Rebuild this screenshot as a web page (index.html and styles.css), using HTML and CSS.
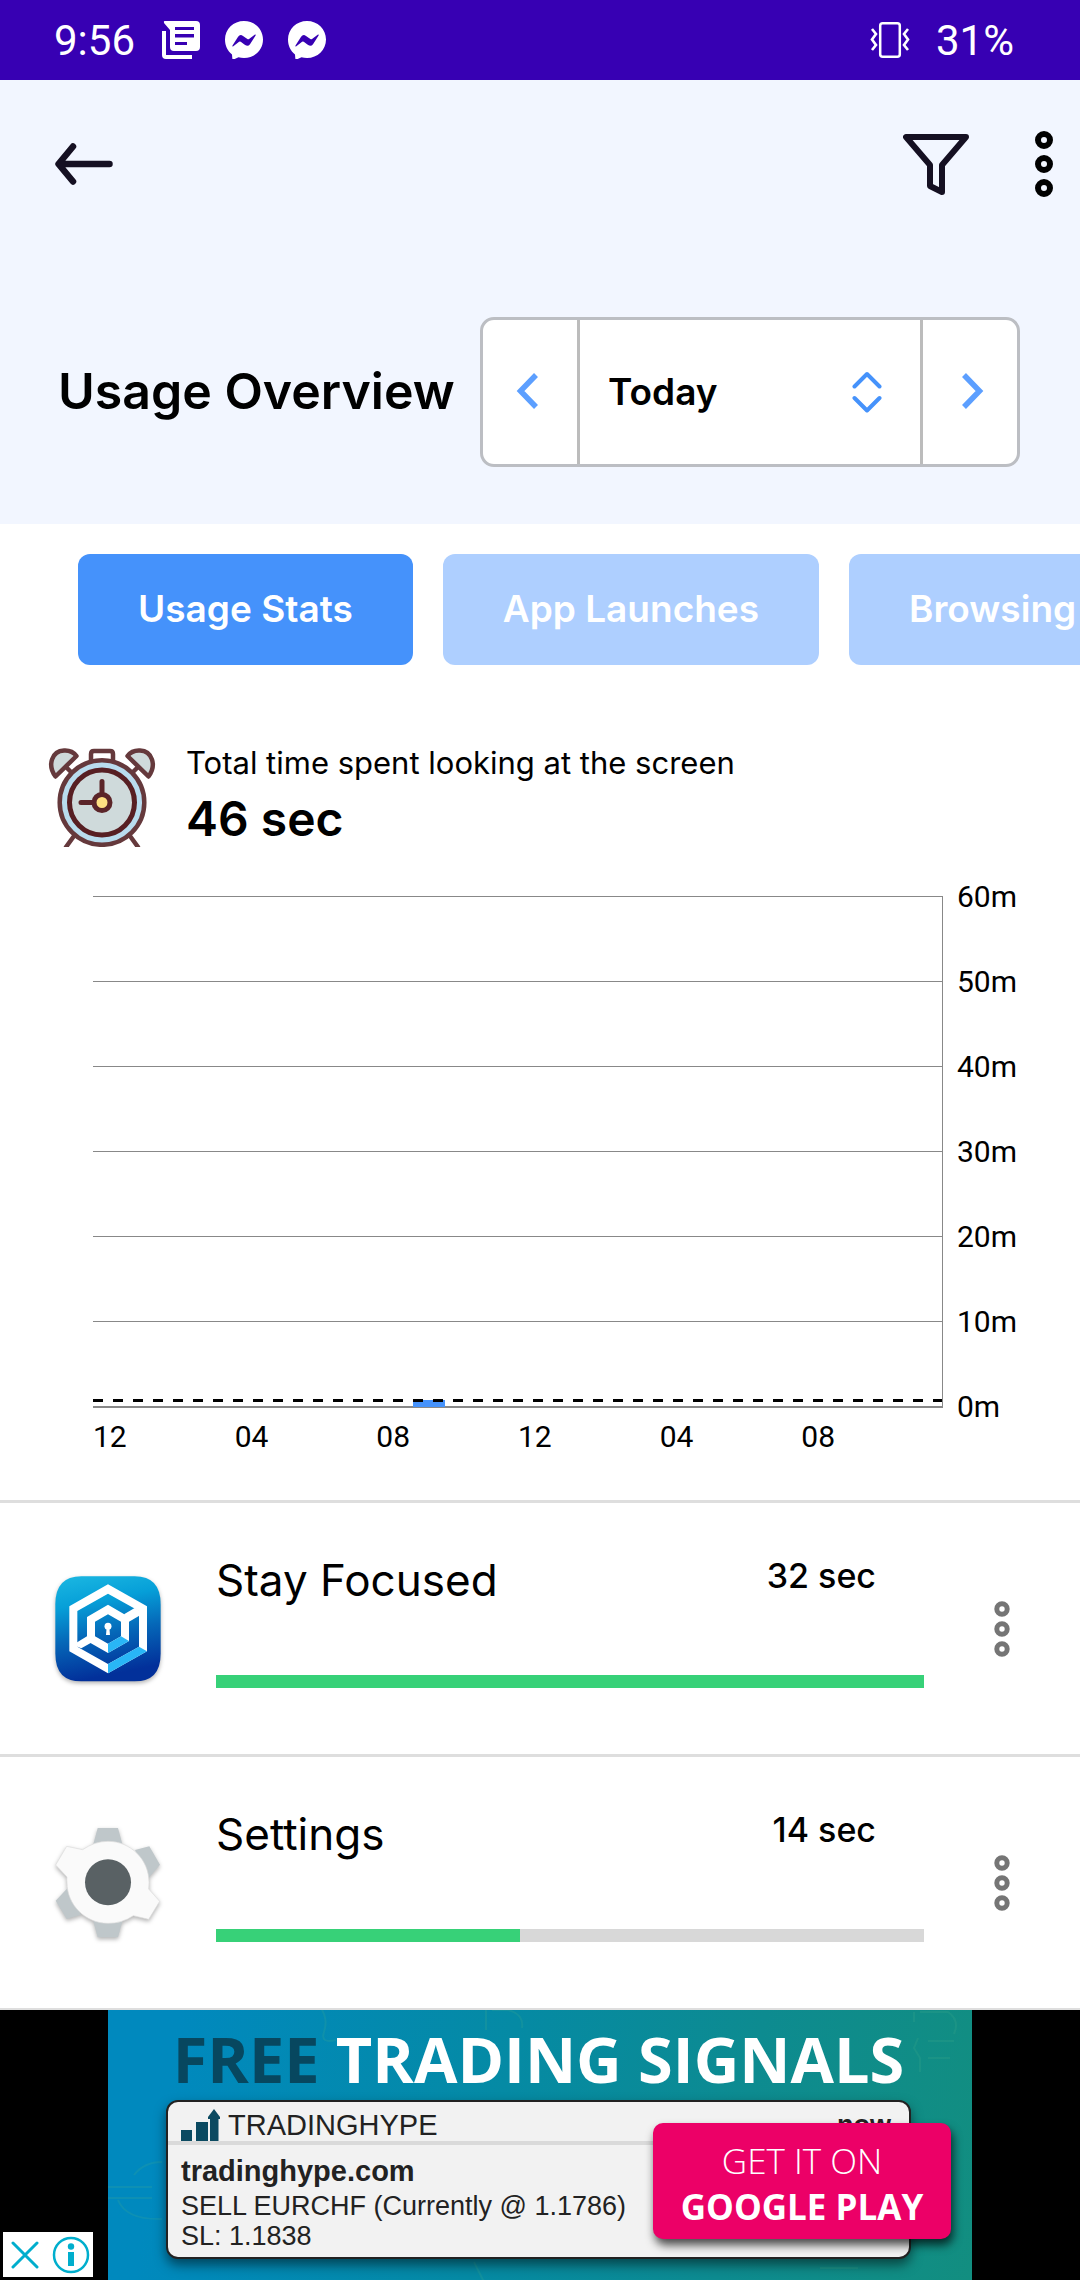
FILE: index.html
```html
<!DOCTYPE html>
<html lang="en">
<head>
<meta charset="utf-8">
<meta name="viewport" content="width=device-width, initial-scale=1">
<title>Usage Overview</title>
<link rel="stylesheet" href="styles.css">
</head>
<body>
<div class="status">
  <span>9:56</span>
  <div class="status-icons">
    <svg width="38" height="38" viewBox="0 0 38 38" aria-hidden="true"><path fill="#fff" fill-rule="evenodd" d="M2.500 0H34a4 4 0 0 1 4 4V26a4 4 0 0 1-4 4H12a4 4 0 0 1-4-4V9L2 2Q1.500 0 2.500 0zM13 6v3h19V6zM13 13v3.500h19V13zM13 21v3h12V21z"/><path fill="#fff" d="M0 10h4v24h26v4H4a4 4 0 0 1-4-4z"/></svg>
    <svg width="38" height="38" viewBox="0 0 38 38" aria-hidden="true"><path fill="#fff" d="M19 0C29.500 0 38 8 38 18.500S29.500 37 19 37q-3 0-5.500-.7L9 38.300q-1.500.5-1.700-1L7 33.500C2.500 30 0 24.500 0 18.500 0 8 8.500 0 19 0z"/><path fill="#3700b3" d="M7.500 24.500l5.600-8.800q2-2.800 4.900-.8l4.400 3.200q.8.500 1.600 0l6-4.500q1-.4.600.8L25 23.200q-2 2.800-4.900.8l-4.400-3.200q-.8-.5-1.600 0L8 25.500q-1 .3-.5-1z"/></svg>
    <svg width="38" height="38" viewBox="0 0 38 38" aria-hidden="true"><path fill="#fff" d="M19 0C29.500 0 38 8 38 18.500S29.500 37 19 37q-3 0-5.500-.7L9 38.300q-1.500.5-1.700-1L7 33.500C2.500 30 0 24.500 0 18.500 0 8 8.500 0 19 0z"/><path fill="#3700b3" d="M7.500 24.500l5.600-8.800q2-2.800 4.900-.8l4.400 3.200q.8.500 1.600 0l6-4.500q1-.4.600.8L25 23.200q-2 2.800-4.900.8l-4.400-3.200q-.8-.5-1.600 0L8 25.500q-1 .3-.5-1z"/></svg>
  </div>
  <svg class="vibrate" width="40" height="38" viewBox="0 0 40 38" fill="none" stroke="#fff" aria-hidden="true"><rect x="10.200" y="2.200" width="19.600" height="33.600" rx="2.500" stroke-width="2.500"/><path stroke-width="2.600" d="M2 8l4 5-4 5.500L6 24l-4 5M38 8l-4 5 4 5.500L34 24l4 5"/></svg>
  <span>31%</span>
</div>

<header class="header">
  <nav class="toolbar">
    <button class="icon-btn" aria-label="Back"><svg width="60" height="42" viewBox="0 0 60 42" fill="none" stroke="#151022" stroke-width="6.500" stroke-linecap="round" stroke-linejoin="round"><path d="M55.500 21H5M19 3.500L4.500 21 19 38.500"/></svg></button>
    <button class="icon-btn push" aria-label="Filter"><svg width="66" height="62" viewBox="0 0 66 62" fill="none" stroke="#151022" stroke-width="6" stroke-linejoin="round"><path d="M3 4H63L39 32V59L27 53V32z"/></svg></button>
    <button class="icon-btn" aria-label="More options"><svg width="18" height="66" viewBox="0 0 18 66" fill="none" stroke="#000" stroke-width="6"><circle cx="9" cy="9" r="6"/><circle cx="9" cy="33" r="6"/><circle cx="9" cy="57" r="6"/></svg></button>
  </nav>
  <div class="overview">
    <h1>Usage Overview</h1>
    <div class="picker">
      <button class="step" aria-label="Previous day"><svg width="28" height="38" viewBox="0 0 28 38" fill="none" stroke="#5c9fff" stroke-width="5.500"><path d="M20 2L4.500 18 20 34"/></svg></button>
      <div class="range">
        <select aria-label="Date range"><option>Today</option></select>
        <svg width="30" height="42" viewBox="0 0 30 42" fill="none" stroke="#4592fb" stroke-width="4" stroke-linecap="round" stroke-linejoin="round" aria-hidden="true"><path d="M2.500 15.500L15 3l12.500 12.500M2.500 27L15 39.500 27.500 27"/></svg>
      </div>
      <button class="step" aria-label="Next day"><svg width="28" height="38" viewBox="0 0 28 38" fill="none" stroke="#5c9fff" stroke-width="5.500"><path d="M8 2L23.500 18 8 34"/></svg></button>
    </div>
  </div>
</header>

<main>
  <div class="tabs">
    <button class="tab active">Usage Stats</button>
    <button class="tab">App Launches</button>
    <button class="tab">Browsing</button>
  </div>

  <section class="summary">
    <svg width="108" height="99" viewBox="0 0 108 99" aria-hidden="true">
      <g stroke="#65393c" stroke-width="4.500" stroke-linecap="round" stroke-linejoin="round" fill="#cfdadb">
        <path d="M26 88l-8 11M82 88l8 11M19 20l8 8M89 20l-8 8" fill="none"/>
        <path d="M7.500 28.500C-1 17 4 3 16 2.500Q24 2 28.500 8zM100.500 28.500C109 17 104 3 92 2.500Q84 2 79.500 8z"/>
        <path d="M43 12V6q0-3 3-3h16q3 0 3 3v6" fill="#fff"/>
        <circle cx="54" cy="54.500" r="42.300" fill="#b9dcee"/>
      </g>
      <circle cx="54" cy="54.500" r="32.500" fill="#cfdadb" stroke="#571f23" stroke-width="5"/>
      <path d="M54 54.500V33.500M54 54.500H33" stroke="#5b2529" stroke-width="5" stroke-linecap="round"/>
      <circle cx="54" cy="54.500" r="8" fill="#ffe082" stroke="#5b2529" stroke-width="5"/>
    </svg>
    <div>
      <p class="caption">Total time spent looking at the screen</p>
      <p class="total">46 sec</p>
    </div>
  </section>

  <section class="chart" aria-label="Screen time by hour">
    <div class="plot-col">
      <div class="plot">
        <i></i><i></i><i></i><i></i><i></i><i></i>
        <div class="bars"><b></b></div>
        <div class="limit"></div>
      </div>
      <div class="x-axis"><span>12</span><span>04</span><span>08</span><span>12</span><span>04</span><span>08</span></div>
    </div>
    <div class="y-axis"><span>60m</span><span>50m</span><span>40m</span><span>30m</span><span>20m</span><span>10m</span><span>0m</span></div>
  </section>

  <ul class="apps">
    <li class="app">
      <svg class="app-icon" width="106" height="106" viewBox="45 45 318 318" aria-hidden="true">
        <defs><linearGradient id="sf" x1="0" y1="0" x2="0.200" y2="1"><stop offset="0" stop-color="#1cb8e2"/><stop offset=".3" stop-color="#069fd8"/><stop offset=".62" stop-color="#0567b8"/><stop offset="1" stop-color="#02309a"/></linearGradient></defs>
        <path fill="url(#sf)" d="M46 130Q46 46 124 46H284Q362 46 362 130V278Q362 361 284 361H124Q46 361 46 278z"/>
        <g fill="#fff">
          <path fill-rule="evenodd" d="M204 70L321 136V271L204 337 88 271V136zM204 98L112 150V257L204 309 297 257V150z"/>
          <path fill-rule="evenodd" d="M204 131L267 168V240L204 276 141 240V168zM204 160L165 182V226L204 248 243 226V182z"/>
          <path d="M252 160L284 141 312 156 267 182zM98 252L141 226 156 244 124 262z"/>
          <circle cx="204" cy="196" r="10.500"/><path d="M200 199h8l2 23h-12z"/>
        </g>
        <path fill="#29b6f6" d="M204 309L297 257 321 271 204 337zM204 248L243 226 267 240 204 276z"/>
      </svg>
      <div class="usage">
        <div class="usage-head"><h2>Stay Focused</h2><span>32 sec</span></div>
        <progress value="100" max="100" aria-label="Stay Focused usage"></progress>
      </div>
      <button class="icon-btn more" aria-label="Stay Focused options"><svg width="16" height="56" viewBox="0 0 16 56" fill="none" stroke="#757575" stroke-width="5"><circle cx="8" cy="8" r="5.200"/><circle cx="8" cy="28" r="5.200"/><circle cx="8" cy="48" r="5.200"/></svg></button>
    </li>
    <li class="app">
      <svg class="app-icon" width="106" height="112" viewBox="165 260 318 336" aria-hidden="true">
        <path fill="#bfc7ca" d="M293 263H354L368 315H279zM405 329L448 318 480 373 446 412zM203 443L167 481 200 536 243 523zM279 540H368L354 591H293z"/>
        <path fill="#fafafa" stroke="#dcdcdc" stroke-width="2" d="M200 318L248 328Q284 303 324 303C392 303 447 358 447 426Q447 436 446 446L479 483 446 537 400 526Q366 549 324 549C256 549 201 494 201 426Q200 418 201 410L167 374z"/>
        <circle cx="324" cy="426" r="69" fill="#596164"/>
      </svg>
      <div class="usage">
        <div class="usage-head"><h2>Settings</h2><span>14 sec</span></div>
        <progress value="43" max="100" aria-label="Settings usage"></progress>
      </div>
      <button class="icon-btn more" aria-label="Settings options"><svg width="16" height="56" viewBox="0 0 16 56" fill="none" stroke="#757575" stroke-width="5"><circle cx="8" cy="8" r="5.200"/><circle cx="8" cy="28" r="5.200"/><circle cx="8" cy="48" r="5.200"/></svg></button>
    </li>
  </ul>
</main>

<aside class="banner">
  <div class="ad">
    <svg class="ad-deco" viewBox="0 0 864 270" preserveAspectRatio="none" fill="none" stroke="#45b08a" stroke-opacity=".2" stroke-width="2" aria-hidden="true"><path d="M26 165Q36 152 54 152M0 177H44M0 188H44M10 190Q18 210 54 209M378 0V20M384 0H400Q416 4 414 18M214 0q6 10 2 22t12 8M222 248H252M366 252l10 20M806 12V2M812 2H840Q852 10 846 24M820 31H846M820 48H842M810 28l-4 10 6 10v14M712 258H750"/></svg>
    <p class="ad-title"><span>FREE</span> TRADING SIGNALS</p>
    <div class="ad-card">
      <div class="ad-head">
        <svg width="39" height="32" viewBox="0 0 39 32" fill="#0b4a61" aria-hidden="true"><path d="M0 21H11V32H0zM15 13H27V32H15zM29 10H27V8L33 0 39 8V10H37.500V32H29z"/></svg>
        <span>TRADINGHYPE</span><b>now</b>
      </div>
      <div class="ad-body">
        <p class="ad-site">tradinghype.com</p>
        <p>SELL EURCHF (Currently @ 1.1786)</p>
        <p>SL: 1.1838</p>
      </div>
    </div>
    <a class="cta" href="#">GET IT ON<b>GOOGLE PLAY</b></a>
  </div>
  <div class="ad-choices">
    <button class="icon-btn" aria-label="Close ad"><svg width="28" height="28" viewBox="0 0 28 28" fill="none" stroke="#00aecd" stroke-width="3" stroke-linecap="round"><path d="M2 2l24 24M26 2L2 26"/></svg></button>
    <button class="icon-btn" aria-label="About this ad"><svg width="38" height="38" viewBox="0 0 38 38" fill="#00aecd"><circle cx="19" cy="19" r="17" fill="none" stroke="#00aecd" stroke-width="2.500"/><circle cx="19" cy="10.500" r="3.200"/><path d="M16 16h6v14h-6z"/></svg></button>
  </div>
</aside>
</body>
</html>
```
FILE: styles.css
```css
* { box-sizing: border-box; }

body {
  margin: 0;
  background: #fff;
  color: #000;
  font-family: Inter, "Open Sans", sans-serif;
  overflow-x: hidden;
}

h1, h2, p, ul { margin: 0; padding: 0; }
button, select { font: inherit; color: inherit; border: 0; background: none; padding: 0; }
svg { display: block; flex: none; }

.icon-btn { display: flex; align-items: center; justify-content: center; }

/* Status bar */
.status {
  display: flex;
  align-items: center;
  height: 80px;
  padding: 0 66px 0 54px;
  background: #3700b3;
  color: #fff;
  font: 400 42px/80px Roboto, sans-serif;
}
.status span { padding-top: 2px; }
.status-icons { display: flex; gap: 25px; margin-left: 27px; }
.vibrate { margin: 0 26px 0 auto; }

/* Header */
.header { background: #f2f6ff; padding-bottom: 57px; }
.toolbar {
  display: flex;
  align-items: center;
  gap: 66px;
  height: 168px;
  padding: 0 27px 0 54px;
}
.push { margin-left: auto; }
.overview {
  display: flex;
  align-items: center;
  justify-content: space-between;
  padding: 69px 60px 0 58px;
}
h1 { padding-bottom: 2px; font-size: 50px; font-weight: 600; line-height: 60px; white-space: nowrap; }
.picker {
  display: flex;
  width: 540px;
  height: 150px;
  border: 3px solid #bcbec3;
  border-radius: 14px;
  background: #fff;
}
.step { display: flex; align-items: center; justify-content: center; width: 94px; }
.range {
  flex: 1;
  display: flex;
  align-items: center;
  padding: 0 38px 0 28px;
  border: solid #bcbcbc;
  border-width: 0 3px;
}
.range select {
  flex: 1;
  height: 100%;
  padding-bottom: 2px;
  appearance: none;
  font-size: 37px;
  font-weight: 600;
}

/* Tabs */
.tabs { display: flex; gap: 30px; padding: 30px 0 0 78px; overflow: hidden; }
.tab {
  flex: none;
  padding: 29px 60px 31px;
  border-radius: 12px;
  background: #aecfff;
  color: #fff;
  font-size: 37px;
  font-weight: 600;
  line-height: 51px;
}
.tab.active { background: #4592fb; }

/* Total */
.summary { display: flex; align-items: center; gap: 30px; padding: 75px 48px 0; }
.caption { font-size: 31px; line-height: 46px; }
.total { font-size: 48px; font-weight: 600; line-height: 66px; padding-bottom: 2px; }

/* Chart */
.chart {
  display: flex;
  gap: 14px;
  padding: 0 63px 42px 93px;
  font: 400 30px/42px Roboto, sans-serif;
}
.plot-col { flex: 1; padding-top: 42px; }
.plot {
  position: relative;
  border-right: 1px solid #888;
  border-bottom: 2px solid #888;
}
.plot i { display: block; height: 85px; border-top: 1px solid #888; }
.bars, .x-axis { display: grid; grid-template-columns: repeat(24, 1fr); }
.bars { position: absolute; inset: auto 0 -1px; height: 7px; }
.bars b { grid-column: 10; margin: 0 2px; background: #4592fb; }
.limit {
  position: absolute;
  inset: auto 0 4px;
  height: 3px;
  background: repeating-linear-gradient(90deg, #000 0 10px, transparent 10px 20px);
}
.x-axis { padding-top: 8px; }
.x-axis span { grid-column: span 4; justify-self: start; }
.y-axis { width: 60px; line-height: 85px; }
.y-axis span { display: block; }

/* App list */
.apps { list-style: none; border-bottom: 2px solid #dedede; }
.app {
  display: flex;
  align-items: center;
  padding: 0 48px 0 55px;
  border-top: 3px solid #dedede;
}
.app-icon { filter: drop-shadow(0 2px 2px rgba(0, 0, 0, .3)); }
.usage { flex: 1; margin: 0 48px 0 55px; padding: 47px 0 66px; }
.usage-head { display: flex; align-items: flex-start; justify-content: space-between; padding-right: 48px; }
h2 { font-size: 44px; font-weight: 400; line-height: 60px; }
.usage-head span { font-size: 34px; font-weight: 500; line-height: 52px; }
progress {
  display: block;
  width: 100%;
  height: 13px;
  margin-top: 65px;
  appearance: none;
  border: 0;
  background: #d8d8d8;
}
progress::-webkit-progress-bar { background: #d8d8d8; }
progress::-webkit-progress-value { background: #37d178; }
.more { width: 60px; height: 80px; }

/* Ad banner */
.banner { position: relative; display: flex; justify-content: center; background: #000; }
.ad {
  position: relative;
  width: 80%;
  padding: 8px 61px 21px 58px;
  background: linear-gradient(100deg, #0089be 8%, #058aa4 45%, #0d8b90 72%, #128e80);
}
.ad-deco { position: absolute; inset: 0; width: 100%; height: 100%; }
.ad-title {
  position: relative;
  color: #fff;
  font: 700 63px/82px "Open Sans", sans-serif;
  text-align: center;
  white-space: nowrap;
}
.ad-title span { color: #07475f; }
.ad-card {
  position: relative;
  border: 2px solid #222;
  border-radius: 12px;
  background: #f2f2f2;
  color: #222;
  font: 400 27px/30px "Liberation Sans", sans-serif;
  box-shadow: 0 6px 12px rgba(0, 0, 0, .5);
}
.ad-head {
  display: flex;
  align-items: flex-end;
  gap: 8px;
  padding: 8px 18px 0 13px;
  border-bottom: 4px solid #dadada;
  font-size: 29px;
  line-height: 31px;
}
.ad-head svg { margin-top: -1px; }
.ad-head b { margin-left: auto; font-size: 27px; }
.ad-body { padding: 6px 13px; }
.ad-site { font-size: 29px; font-weight: 700; line-height: 40px; }
.cta {
  position: absolute;
  top: 113px;
  right: 21px;
  width: 298px;
  padding: 15px 0 9px;
  border-radius: 10px;
  background: #ec0067;
  color: #fff;
  font: 300 35px/46px "Open Sans", sans-serif;
  text-align: center;
  text-decoration: none;
  box-shadow: 2px 6px 10px rgba(0, 0, 0, .7);
}
.cta b { display: block; font-weight: 700; }
.ad-choices {
  position: absolute;
  left: 3px;
  bottom: 3px;
  display: flex;
  align-items: center;
  justify-content: space-between;
  width: 90px;
  height: 45px;
  padding: 0 3px 0 8px;
  background: #fff;
}
```
